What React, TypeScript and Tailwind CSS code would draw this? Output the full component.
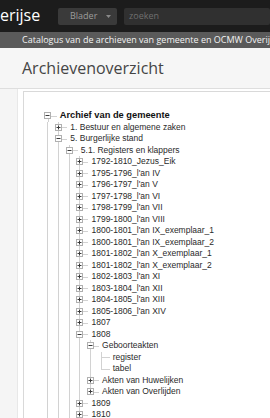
import React from "react";

type TNode = {
  label: string;
  open?: boolean;
  bold?: boolean;
  leaf?: boolean;
  more?: boolean;
  children?: TNode[];
};

const years = [
  "1792-1810_Jezus_Eik",
  "1795-1796_l'an IV",
  "1796-1797_l'an V",
  "1797-1798_l'an VI",
  "1798-1799_l'an VII",
  "1799-1800_l'an VIII",
  "1800-1801_l'an IX_exemplaar_1",
  "1800-1801_l'an IX_exemplaar_2",
  "1801-1802_l'an X_exemplaar_1",
  "1801-1802_l'an X_exemplaar_2",
  "1802-1803_l'an XI",
  "1803-1804_l'an XII",
  "1804-1805_l'an XIII",
  "1805-1806_l'an XIV",
  "1807",
];

const tree: TNode[] = [
  {
    label: "Archief van de gemeente",
    bold: true,
    open: true,
    more: true,
    children: [
      { label: "1. Bestuur en algemene zaken" },
      {
        label: "5. Burgerlijke stand",
        open: true,
        more: true,
        children: [
          {
            label: "5.1. Registers en klappers",
            open: true,
            more: true,
            children: [
              ...years.map((y) => ({ label: y })),
              {
                label: "1808",
                open: true,
                children: [
                  {
                    label: "Geboorteakten",
                    open: true,
                    children: [
                      { label: "register", leaf: true },
                      { label: "tabel", leaf: true },
                    ],
                  },
                  { label: "Akten van Huwelijken" },
                  { label: "Akten van Overlijden" },
                ],
              },
              { label: "1809" },
              { label: "1810", more: true },
            ],
          },
        ],
      },
    ],
  },
];

type Row = {
  node: TNode;
  depth: number;
  guides: boolean[];
  hasNext: boolean;
  first: boolean;
};

function flatten(nodes: TNode[], depth: number, guides: boolean[], out: Row[]) {
  nodes.forEach((n, i) => {
    const hasNext = i < nodes.length - 1 || !!n.more;
    out.push({ node: n, depth, guides, hasNext, first: depth === 0 && i === 0 });
    if (n.open && n.children) {
      flatten(n.children, depth + 1, [...guides, hasNext], out);
    }
  });
  return out;
}

const rows = flatten(tree, 0, [], []);

function Expander({ open }: { open: boolean }) {
  return (
    <svg width="7" height="7" viewBox="0 0 7 7" className="relative block">
      <rect x="0.5" y="0.5" width="6" height="6" fill="#ffffff" stroke="#b0b0b0" />
      <path d="M1.5 3.5h4" stroke="#3a3a3a" strokeWidth="1" />
      {!open && <path d="M3.5 1.5v4" stroke="#3a3a3a" strokeWidth="1" />}
    </svg>
  );
}

function TreeRow({ row }: { row: Row }) {
  const { node, guides, hasNext, first } = row;
  return (
    <div className="flex h-[11.5px] items-center">
      {guides.map((g, i) => (
        <div key={i} className="flex h-full w-[10.6px] shrink-0 justify-center">
          {g && <div className="h-full w-0 border-l border-[#d2d2d2]" />}
        </div>
      ))}
      <div className="relative flex h-full w-[10.6px] shrink-0 items-center justify-center">
        {!first && (
          <div className="absolute left-[5px] top-0 h-1/2 w-0 border-l border-[#d2d2d2]" />
        )}
        {hasNext && (
          <div className="absolute bottom-0 left-[5px] h-1/2 w-0 border-l border-[#d2d2d2]" />
        )}
        <div className="absolute left-[5px] top-1/2 h-0 w-[9px] border-t border-[#d2d2d2]" />
        {!node.leaf && <Expander open={!!node.open} />}
      </div>
      <span
        className={
          node.bold
            ? "ml-[6.4px] whitespace-nowrap text-[9.3px] font-bold leading-[11.5px] text-[#111]"
            : "ml-[6.4px] whitespace-nowrap text-[8.5px] leading-[11.5px] text-[#2a2a2a]"
        }
      >
        {node.label}
      </span>
    </div>
  );
}

export default function App() {
  return (
    <div className="flex h-[418px] w-[270px] flex-col overflow-hidden bg-[#f5f5f5] font-['Open_Sans',sans-serif]">
      <header className="flex h-[32px] shrink-0 items-center bg-[#1c1c1c]">
        <div className="w-[58px] shrink-0 pb-[2px] text-[16px] leading-none text-white">erijse</div>
        <div className="flex h-[17px] w-[59px] shrink-0 items-center rounded-[2px] bg-[#3a3a3a] pl-[12px] text-[9px] text-[#9c9c9c]">
          <span>Blader</span>
          <svg width="5" height="3" viewBox="0 0 5 3" className="ml-[9px]">
            <path d="M0 0h5L2.5 3z" fill="#8a8a8a" />
          </svg>
        </div>
        <div className="ml-[7px] flex h-[17px] flex-1 items-center rounded-[2px] bg-[#303030] pl-[5px] text-[9px] text-[#6f6f6f]">
          zoeken
        </div>
      </header>
      <div className="flex h-[16px] shrink-0 items-center overflow-hidden whitespace-nowrap bg-[#5a5a5a] pl-[22px] text-[9px] text-[#f2f2f2]">
        Catalogus van de archieven van gemeente en OCMW Overijse
      </div>
      <div className="flex h-[41px] shrink-0 items-center border-b border-[#dedede] bg-[#f6f6f6] pl-[22px] text-[16px] text-[#454545]">
        Archievenoverzicht
      </div>
      <div className="ml-[17px] flex flex-1 border-l border-[#e8e8e8] bg-white pl-[5px] pt-[2px]">
        <div className="flex-1 border-l border-t border-[#d9d9d9] bg-white pl-[18.7px] pt-[18.2px] font-['Liberation_Sans',Arial,sans-serif]">
          {rows.map((r, i) => (
            <TreeRow key={i} row={r} />
          ))}
        </div>
      </div>
    </div>
  );
}
